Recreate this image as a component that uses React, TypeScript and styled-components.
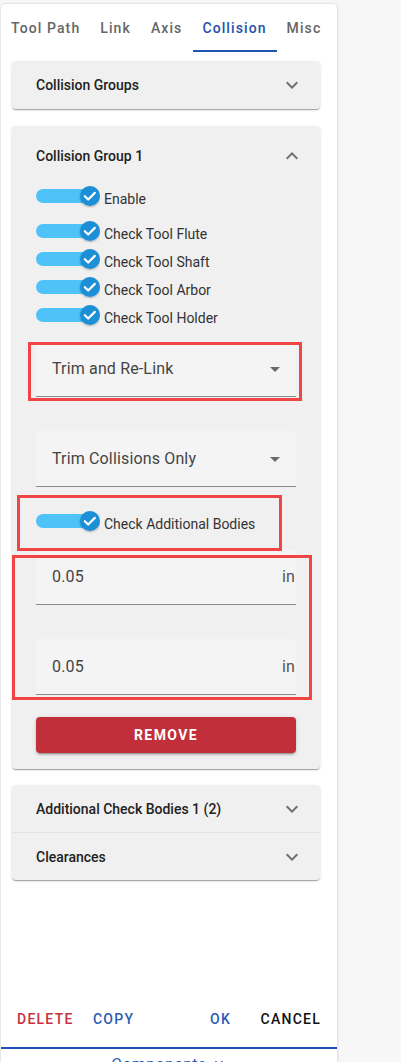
import React from 'react';
import styled, { createGlobalStyle } from 'styled-components';

const GlobalStyle = createGlobalStyle`
  html, body { margin: 0; padding: 0; background: #f7f7f7; overflow: hidden; }
  * { box-sizing: border-box; }
`;

const Page = styled.div`
  height: 1062px;
  padding: 4px 0 0 1px;
  font-family: Roboto, 'Liberation Sans', sans-serif;
`;

const Panel = styled.div`
  width: 336px;
  height: 1058px;
  background: #fff;
  border-radius: 4px 4px 0 0;
  box-shadow: 0 0 2px rgba(0, 0, 0, 0.18), 1px 0 3px rgba(0, 0, 0, 0.06);
  display: flex;
  flex-direction: column;
  overflow: hidden;
`;

const TabBar = styled.div`
  display: flex;
  height: 48px;
  flex-shrink: 0;
`;

const Tab = styled.div<{ $active?: boolean }>`
  position: relative;
  display: flex;
  align-items: center;
  padding: 0 10px;
  font-size: 14px;
  font-weight: 500;
  letter-spacing: 1.1px;
  color: ${({ $active }) => ($active ? '#2451a9' : '#666')};
  &::after {
    content: '';
    display: ${({ $active }) => ($active ? 'block' : 'none')};
    position: absolute;
    left: 1px;
    right: 0;
    bottom: 0;
    height: 2px;
    background: #1f56b3;
  }
`;

const Body = styled.div`
  flex: 1;
  padding: 9px 17px 0 11px;
`;

const Card = styled.div<{ $gap?: number }>`
  background: #f0f0f0;
  border-radius: 4px;
  margin-top: ${({ $gap }) => $gap || 0}px;
  box-shadow: 0 2px 1px -1px rgba(0, 0, 0, 0.2), 0 1px 1px 0 rgba(0, 0, 0, 0.14),
    0 1px 3px 0 rgba(0, 0, 0, 0.12);
`;

const Summary = styled.div<{ $height?: number; $divider?: boolean }>`
  display: flex;
  align-items: center;
  justify-content: space-between;
  height: ${({ $height }) => $height || 48}px;
  padding: 0 16px 0 24px;
  border-top: ${({ $divider }) => ($divider ? '1px solid #e3e3e3' : 'none')};
  font-size: 14px;
  font-weight: 500;
  color: #222;
`;

const Details = styled.div`
  position: relative;
  display: flex;
  flex-direction: column;
  padding: 0 24px 16px 24px;
`;

const ToggleRow = styled.div<{ $mt?: number }>`
  display: flex;
  align-items: flex-start;
  height: 20px;
  margin-top: ${({ $mt }) => $mt || 0}px;
`;

const ToggleLabel = styled.span`
  margin-left: 4px;
  padding-top: 3px;
  font-size: 14px;
  line-height: 20px;
  color: #333;
`;

const Field = styled.div<{ $mt?: number; $select?: boolean }>`
  display: flex;
  align-items: center;
  justify-content: space-between;
  height: 56px;
  margin-top: ${({ $mt }) => $mt || 0}px;
  padding: 0 ${({ $select }) => ($select ? 9 : 1)}px 0 16px;
  background: #f4f4f4;
  border-radius: 4px 4px 0 0;
  border-bottom: 1px solid #8c8c8c;
  font-size: 16px;
  letter-spacing: 0.15px;
  color: #444;
`;

const Adornment = styled.span`
  font-size: 16px;
  color: #555;
`;

const RemoveButton = styled.button`
  height: 36px;
  margin-top: 22px;
  border: none;
  border-radius: 4px;
  background: #c12f3a;
  color: #fff;
  font-family: Roboto, 'Liberation Sans', sans-serif;
  font-size: 14px;
  font-weight: 700;
  letter-spacing: 1.4px;
  box-shadow: 0 3px 1px -2px rgba(0, 0, 0, 0.2), 0 2px 2px 0 rgba(0, 0, 0, 0.14),
    0 1px 5px 0 rgba(0, 0, 0, 0.12);
`;

const Annotation = styled.div<{ $top: number; $left: number; $w: number; $h: number }>`
  position: absolute;
  top: ${({ $top }) => $top}px;
  left: ${({ $left }) => $left}px;
  width: ${({ $w }) => $w}px;
  height: ${({ $h }) => $h}px;
  border: 3px solid #f04545;
  pointer-events: none;
`;

const Footer = styled.div`
  display: flex;
  align-items: center;
  justify-content: space-between;
  height: 56px;
  flex-shrink: 0;
  padding: 0 8px;
`;

const ButtonGroup = styled.div`
  display: flex;
`;

const TextButton = styled.button<{ $color: string }>`
  min-width: 64px;
  height: 36px;
  padding: 0 8px;
  border: none;
  background: none;
  color: ${({ $color }) => $color};
  font-family: Roboto, 'Liberation Sans', sans-serif;
  font-size: 14px;
  font-weight: 500;
  letter-spacing: 1.25px;
  text-transform: uppercase;
`;

const BottomTab = styled.div`
  flex-shrink: 0;
  height: 15px;
  border-top: 2px solid #1f56b3;
  display: flex;
  justify-content: center;
  align-items: flex-start;
  gap: 4px;
  padding-top: 6px;
  font-size: 16px;
  letter-spacing: 0.4px;
  color: #2c5cb4;
`;

const ExpandIcon = ({ up }: { up?: boolean }) => (
  <svg width="24" height="24" viewBox="0 0 24 24" fill="#707070">
    {up ? (
      <path d="M12 8l-6 6 1.41 1.41L12 10.83l4.59 4.58L18 14z" />
    ) : (
      <path d="M16.59 8.59 12 13.17 7.41 8.59 6 10l6 6 6-6z" />
    )}
  </svg>
);

const DropArrow = () => (
  <svg width="24" height="24" viewBox="0 0 24 24" fill="#6a6a6a">
    <path d="M7 10l5 5 5-5z" />
  </svg>
);

const SwitchIcon = () => (
  <svg width="64" height="22" viewBox="0 0 64 22">
    <defs>
      <filter id="thumbShadow" x="-30%" y="-30%" width="160%" height="160%">
        <feDropShadow dx="0" dy="1" stdDeviation="0.8" floodColor="#000" floodOpacity="0.3" />
      </filter>
    </defs>
    <rect x="0" y="3" width="58" height="14" rx="7" fill="#4fc3f7" />
    <circle cx="54" cy="10" r="10" fill="#1a8fd6" filter="url(#thumbShadow)" />
    <path d="M48.8 10.2l3.4 3.3 6.6-6.6" fill="none" stroke="#fff" strokeWidth="2.2" strokeLinecap="round" strokeLinejoin="round" />
  </svg>
);

const Toggle = ({ label, mt }: { label: string; mt?: number }) => (
  <ToggleRow $mt={mt}>
    <SwitchIcon />
    <ToggleLabel>{label}</ToggleLabel>
  </ToggleRow>
);

const tabs = ['Tool Path', 'Link', 'Axis', 'Collision', 'Misc'];

export default function App() {
  return (
    <Page>
      <GlobalStyle />
      <Panel>
        <TabBar>
          {tabs.map(t => (
            <Tab key={t} $active={t === 'Collision'}>{t}</Tab>
          ))}
        </TabBar>

        <Body>
          <Card>
            <Summary>
              Collision Groups
              <ExpandIcon />
            </Summary>
          </Card>

          <Card $gap={17}>
            <Summary $height={60}>
              Collision Group 1
              <ExpandIcon up />
            </Summary>
            <Details>
              <Toggle label="Enable" />
              <Toggle label="Check Tool Flute" mt={15} />
              <Toggle label="Check Tool Shaft" mt={8} />
              <Toggle label="Check Tool Arbor" mt={8} />
              <Toggle label="Check Tool Holder" mt={8} />

              <Field $mt={16} $select>
                Trim and Re-Link
                <DropArrow />
              </Field>
              <Field $mt={34} $select>
                Trim Collisions Only
                <DropArrow />
              </Field>

              <Toggle label="Check Additional Bodies" mt={24} />

              <Field $mt={18}>
                0.05
                <Adornment>in</Adornment>
              </Field>
              <Field $mt={34}>
                0.05
                <Adornment>in</Adornment>
              </Field>

              <RemoveButton>REMOVE</RemoveButton>

              <Annotation $top={156} $left={16} $w={274} $h={59} />
              <Annotation $top={309} $left={5} $w={265} $h={56} />
              <Annotation $top={369} $left={0} $w={300} $h={145} />
            </Details>
          </Card>

          <Card $gap={16}>
            <Summary $height={47}>
              Additional Check Bodies 1 (2)
              <ExpandIcon />
            </Summary>
            <Summary $divider>
              Clearances
              <ExpandIcon />
            </Summary>
          </Card>
        </Body>

        <Footer>
          <ButtonGroup>
            <TextButton $color="#c8313c">Delete</TextButton>
            <TextButton $color="#2c5cb4">Copy</TextButton>
          </ButtonGroup>
          <ButtonGroup>
            <TextButton $color="#2c5cb4">OK</TextButton>
            <TextButton $color="#111">Cancel</TextButton>
          </ButtonGroup>
        </Footer>

        <BottomTab>
          Components
          <svg width="16" height="16" viewBox="0 0 24 24" fill="#2c5cb4">
            <path d="M16.59 8.59 12 13.17 7.41 8.59 6 10l6 6 6-6z" />
          </svg>
        </BottomTab>
      </Panel>
    </Page>
  );
}
